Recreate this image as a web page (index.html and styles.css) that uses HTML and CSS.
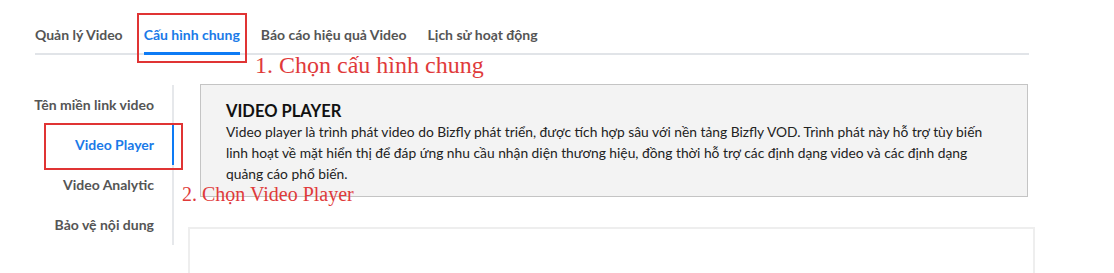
FILE: index.html
```html
<!DOCTYPE html>
<html>
<head>
	<title>Cấu hình chung</title>
	<link rel="stylesheet" href="styles.css">
	<meta charset="utf-8">
</head>
<body>
	<div class="page">
		<div class="tabs">
			<span class="tab">Quản lý Video</span>
			<span class="tab tab--active">Cấu hình chung</span>
			<span class="tab">Báo cáo hiệu quả Video</span>
			<span class="tab">Lịch sử hoạt động</span>
		</div>

		<div class="main">
			<div class="side">
				<div class="side__item">Tên miền link video</div>
				<div class="side__item side__item--active">Video Player</div>
				<div class="side__item">Video Analytic</div>
				<div class="side__item">Bảo vệ nội dung</div>
			</div>

			<div class="content">
				<div class="intro">
					<p class="intro__title">VIDEO PLAYER</p>
					<p class="intro__text">Video player là trình phát video do Bizfly phát triển, được tích hợp sâu với nền tảng Bizfly VOD. Trình phát này hỗ trợ tùy biến linh hoạt về mặt hiển thị để đáp ứng nhu cầu nhận diện thương hiệu, đồng thời hỗ trợ các định dạng video và các định dạng quảng cáo phổ biến.</p>
				</div>
				<div class="panel"></div>
			</div>
		</div>
	</div>

	<!-- annotations -->
	<div class="mark mark--tab"></div>
	<div class="note note--tab">1. Chọn cấu hình chung</div>
	<div class="mark mark--side"></div>
	<div class="note note--side">2. Chọn Video Player</div>
</body>
</html>
```

FILE: styles.css
```css
* {
	box-sizing: border-box;
	margin: 0;
	padding: 0;
}

body {
	font-family: Lato, "Open Sans", sans-serif;
	color: #222;
	background: white;
	overflow: hidden;
}

.page {
	padding: 0 0 0 35px;
}

.tabs {
	display: flex;
	gap: 21px;
	width: 994px;
	padding-top: 26px;
	border-bottom: 2px solid #e1e4e8;
}

.tab {
	font-size: 14px;
	font-weight: bold;
	color: #555;
	padding-bottom: 9px;
	margin-bottom: -2px;
	border-bottom: 3px solid transparent;
	line-height: 17px;
}

.tab--active {
	color: #1a7ae8;
	border-bottom-color: #0d7bf5;
}

.main {
	display: flex;
	margin-top: 30px;
}

.side {
	width: 147px;
	margin-left: -8px;
	border-right: 2px solid #e6e8eb;
	align-self: flex-start;
}

.side__item {
	height: 40px;
	line-height: 40px;
	padding-right: 18px;
	text-align: right;
	white-space: nowrap;
	font-size: 14px;
	font-weight: bold;
	color: #555;
	margin-right: -2px;
	border-right: 2px solid transparent;
}

.side__item--active {
	color: #1a7ae8;
	border-right-color: #0d7bf5;
}

.content {
	width: 847px;
	margin-left: 14px;
	margin-top: -1px;
}

.intro {
	margin: 0 7px 0 12px;
	background: #f3f3f3;
	border: 1px solid #c4c4c4;
	padding: 16px 26px 9px 25px;
	height: 113px;
}

.intro__title {
	font-size: 16.5px;
	font-weight: bold;
	color: #111;
	line-height: 20px;
}

.intro__text {
	font-size: 13.8px;
	line-height: 21px;
	color: #222;
}

.panel {
	margin-top: 30px;
	height: 60px;
	border: 2px solid #eeeeee;
	border-bottom: none;
}

.mark {
	position: absolute;
	border: 2px solid #e03434;
}

.mark--tab {
	left: 137px;
	top: 13px;
	width: 110px;
	height: 50px;
}

.mark--side {
	left: 44px;
	top: 123px;
	width: 139px;
	height: 47px;
}

.note {
	position: absolute;
	font-family: "Liberation Serif", serif;
	color: #e03a3a;
	white-space: nowrap;
}

.note--tab {
	left: 255px;
	top: 52px;
	font-size: 24px;
}

.note--side {
	left: 182px;
	top: 183px;
	font-size: 20px;
}
```
